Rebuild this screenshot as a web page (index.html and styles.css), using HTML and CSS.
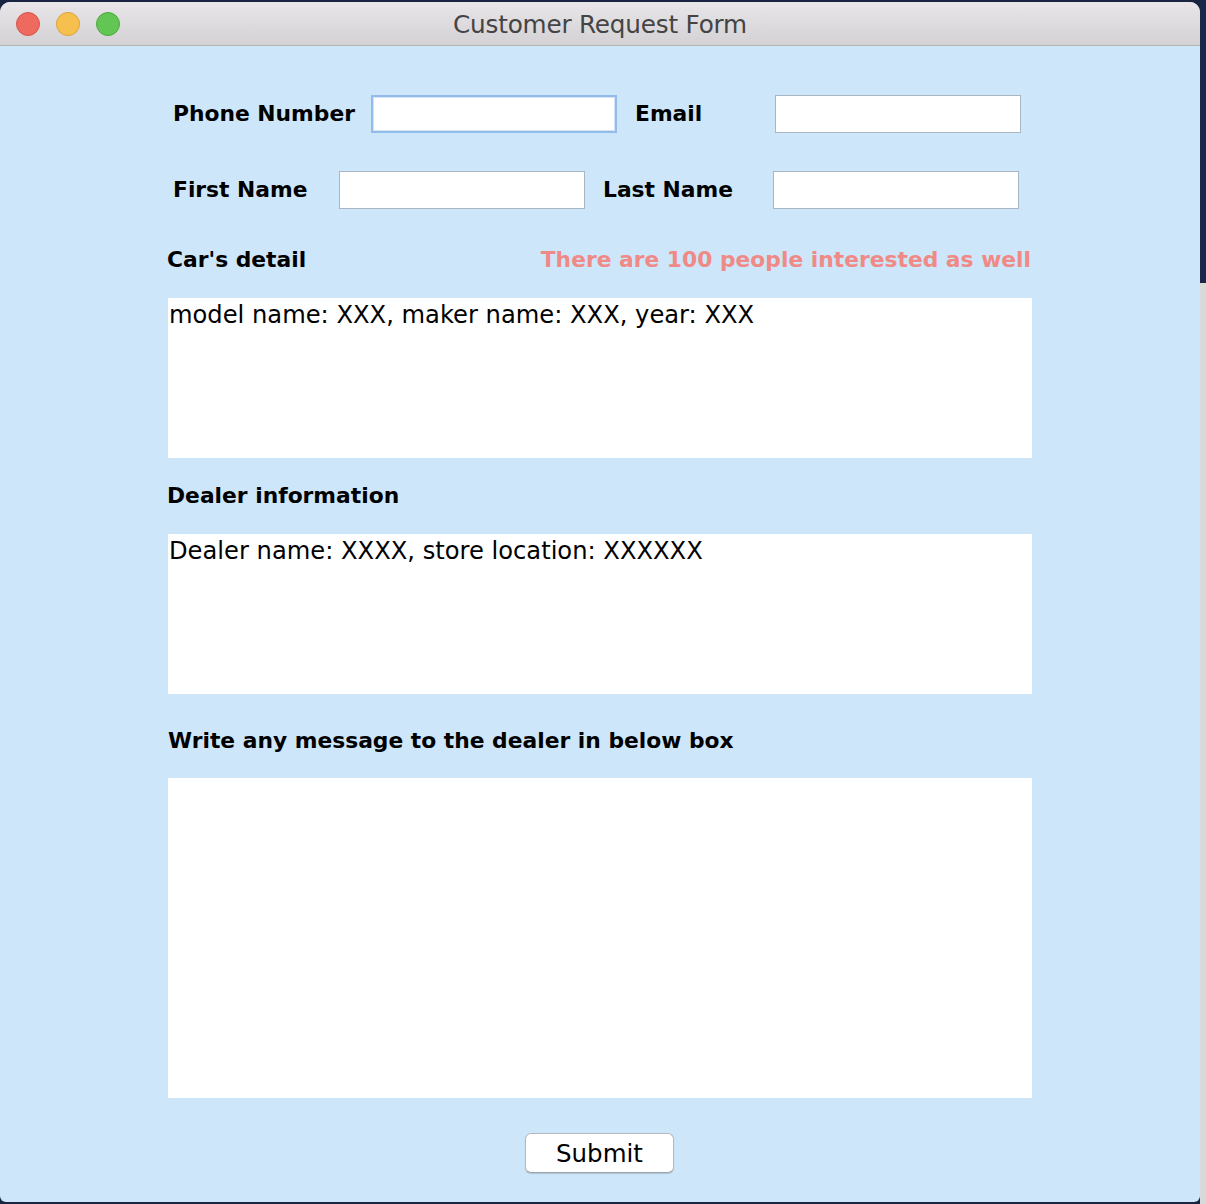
FILE: index.html
```html
<!DOCTYPE html>
<html>
<head>
<meta charset="utf-8">
<link rel="stylesheet" href="styles.css">
</head>
<body>
<div class="desktop">
  <div class="window">
    <div class="titlebar">
      <div class="lights">
        <span class="light red"></span>
        <span class="light yellow"></span>
        <span class="light green"></span>
      </div>
      <div class="title">Customer Request Form</div>
    </div>
    <div class="content">
      <div class="row row1">
        <label class="lbl l-phone">Phone Number</label>
        <div class="input focused"></div>
        <label class="lbl l-email">Email</label>
        <div class="input"></div>
      </div>
      <div class="row row2">
        <label class="lbl l-first">First Name</label>
        <div class="input"></div>
        <label class="lbl l-last">Last Name</label>
        <div class="input"></div>
      </div>
      <div class="heading heading-car">
        <span>Car's detail</span>
        <span class="notice">There are 100 people interested as well</span>
      </div>
      <div class="area area-small">model name: XXX, maker name: XXX, year: XXX</div>
      <div class="heading heading-dealer"><span>Dealer information</span></div>
      <div class="area area-small">Dealer name: XXXX, store location: XXXXXX</div>
      <div class="heading heading-msg"><span>Write any message to the dealer in below box</span></div>
      <div class="area area-large"></div>
      <div class="actions"><button class="submit">Submit</button></div>
    </div>
  </div>
  <div class="side">
    <div class="side-dark"></div>
    <div class="side-gray"></div>
  </div>
</div>
</body>
</html>
```
FILE: styles.css
```css
html, body {
  margin: 0;
  padding: 0;
  background: #1a2340;
  width: 1206px;
  height: 1204px;
  overflow: hidden;
}
.desktop {
  display: flex;
  width: 1206px;
  height: 1204px;
}
.window {
  width: 1200px;
  height: 1200px;
  margin-top: 2px;
  border-radius: 10px 10px 6px 6px;
  overflow: hidden;
  background: #cde6f9;
  display: flex;
  flex-direction: column;
  font-family: "DejaVu Sans", "Liberation Sans", sans-serif;
  color: #000;
}
.titlebar {
  height: 43px;
  flex: none;
  background: linear-gradient(#e8e6e8, #d3d1d3);
  border-bottom: 1px solid #b4b4b4;
  position: relative;
  display: flex;
  align-items: center;
  justify-content: center;
}
.lights {
  position: absolute;
  left: 16px;
  top: 10px;
  display: flex;
  gap: 16px;
}
.light {
  width: 24px;
  height: 24px;
  border-radius: 50%;
  box-sizing: border-box;
}
.red { background: #ee6a5f; border: 1px solid #d5554b; }
.yellow { background: #f6c04f; border: 1px solid #dca23a; }
.green { background: #62c554; border: 1px solid #4ea83f; }
.title {
  font-size: 24.7px;
  color: #444;
  letter-spacing: -0.2px;
  padding-top: 2px;
}
.content {
  display: flex;
  flex-direction: column;
  padding-left: 167px;
  width: 865px;
}
.row {
  display: flex;
  align-items: center;
  height: 38px;
}
.row1 { margin-top: 49px; }
.row2 { margin-top: 38px; }
.lbl {
  font-weight: bold;
  font-size: 21.8px;
  flex: none;
  padding-left: 6px;
  box-sizing: border-box;
  margin-top: -1px;
}
.l-phone { width: 204px; }
.l-email { width: 158px; padding-left: 18px; }
.l-first { width: 172px; }
.l-last { width: 188px; padding-left: 18px; }
.input {
  width: 246px;
  height: 38px;
  box-sizing: border-box;
  background: #fff;
  border: 1px solid #a9b6c3;
  flex: none;
}
.input.focused {
  border: 2px solid #93bcea;
  box-shadow: inset 0 0 0 1px #d3e4f6;
}
.heading {
  display: flex;
  justify-content: space-between;
  align-items: center;
  height: 30px;
  font-weight: bold;
  font-size: 21.8px;
  width: 864px;
}
.heading-car { margin-top: 35px; }
.heading-dealer { margin-top: 22px; }
.heading-msg { margin-top: 31px; padding-left: 1px; }
.notice {
  color: #f08a86;
  font-size: 21.8px;
}
.area {
  background: #fff;
  width: 864px;
  margin-left: 1px;
  margin-top: 24px;
  font-size: 24.2px;
  line-height: 34px;
  padding-left: 1px;
  box-sizing: border-box;
}
.area-small { height: 160px; }
.area-large { height: 320px; margin-top: 23px; }
.actions {
  display: flex;
  justify-content: center;
  margin-top: 35px;
  width: 865px;
}
.submit {
  width: 149px;
  height: 40px;
  background: #fff;
  border: 1px solid #b5b9be;
  border-bottom-color: #9ea3a8;
  border-radius: 6px;
  font-family: "DejaVu Sans", "Liberation Sans", sans-serif;
  font-size: 24.5px;
  color: #000;
  padding: 0;
  box-shadow: 0 1px 1px rgba(0,0,0,0.15);
}
.side {
  width: 6px;
  display: flex;
  flex-direction: column;
}
.side-dark { height: 283px; background: #1c2747; }
.side-gray { flex: 1; background: #d9d9d9; }
```
